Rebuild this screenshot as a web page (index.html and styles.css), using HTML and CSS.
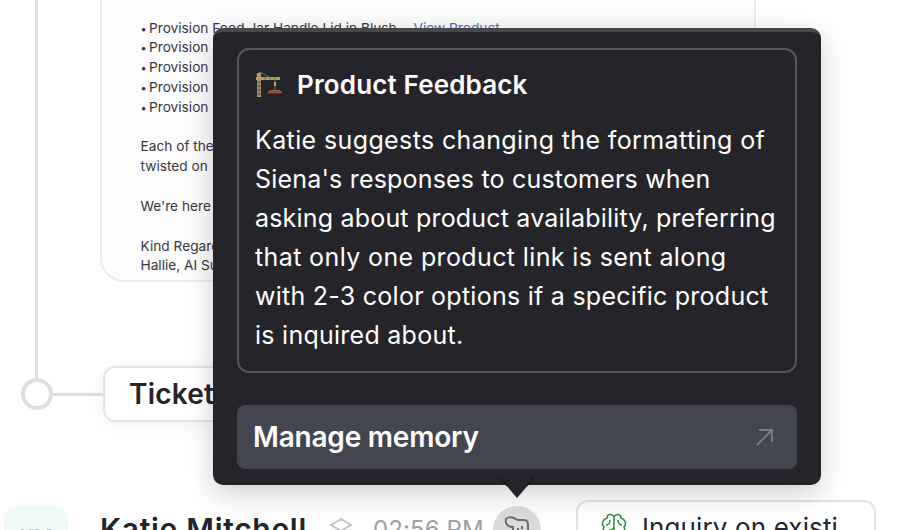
FILE: index.html
```html
<!DOCTYPE html>
<html lang="en">
<head>
<meta charset="utf-8">
<title>Conversation</title>
<link rel="stylesheet" href="styles.css">
</head>
<body>
<main class="page">
  <section class="timeline">
    <div class="rail">
      <div class="rail-line"></div>
      <div class="rail-node"><span class="ring"></span><span class="connector"></span></div>
    </div>
    <div class="events">
      <article class="email">
        <ul class="products">
          <li><span class="bullet">•</span>Provision Food Jar Handle Lid in Blush <span class="dash">-</span><a class="link">View Product</a></li>
          <li><span class="bullet">•</span>Provision</li>
          <li><span class="bullet">•</span>Provision</li>
          <li><span class="bullet">•</span>Provision</li>
          <li><span class="bullet">•</span>Provision</li>
        </ul>
        <p>Each of these<br>twisted on</p>
        <p>We're here</p>
        <p>Kind Regards,<br>Hallie, AI Support</p>
      </article>
      <div class="ticket">Ticket</div>
    </div>
  </section>
  <section class="message">
    <div class="avatar">KM</div>
    <div class="name">Katie Mitchell</div>
    <svg class="layers" width="24" height="24" viewBox="0 0 24 24"><path d="M2 7 12 1l10 6-10 6zM2 12l10 6 10-6"/></svg>
    <div class="time">02:56 PM</div>
    <div class="memory"><svg width="28" height="28" viewBox="0 0 28 28"><path d="M9 15v-3C3 12 1 8 2 4c1-2 5-2 8-1 2 1 2 2 4 2h6c3 0 4 2 4 5v6c0 5-4 7-8 7-4 0-7-4-7-8M14 13v2M18 11v3"/></svg></div>
    <div class="tag">
      <svg width="28" height="28" viewBox="0 0 28 28"><path d="M14 4v21M14 5C12 1 7 2 7 6 3 7 1 12 4 15c-2 4 1 8 5 8 1 3 5 3 5 0M14 5c2-4 7-3 7 1 4 1 6 6 3 9 2 4-1 8-5 8-1 3-5 3-5 0M10 8c0 3-2 5-4 5M18 8c0 3 2 5 4 5M9 18c3 0 5-2 5-4"/></svg>
      <span>Inquiry on existi</span>
    </div>
  </section>
</main>
<aside class="tooltip">
  <div class="memo">
    <h2 class="memo-title">
      <svg width="28" height="28" viewBox="0 0 28 28"><path class="cable" d="M1 4 5 1l9 5M20 9v10"/><path class="mast" d="M2 2h4v24H2zM1 6h24v3H1z"/><path class="lattice" d="M2 11h4M2 15h4M2 19h4M2 23h4M9 7.5h2M14 7.5h2M19 7.5h2M4 10v15"/><path class="hook" d="M20 11v4"/><path class="cable" d="M15 19.5h10"/><path class="load" d="M13 20h14v2.4H13z"/></svg>
      <span>Product Feedback</span>
    </h2>
    <p class="memo-text"><span class="wide">Katie suggests changing the formatting of</span><br><span class="snug">Siena's responses to customers when</span><br><span class="snug">asking about product availability, preferring</span><br><span class="wide">that only one product link is sent along</span><br>with 2-3 color options if a specific product<br>is inquired about.</p>
  </div>
  <div class="manage">
    <span>Manage memory</span>
    <svg width="18" height="18" viewBox="0 0 18 18"><path d="M1 17 16 2M3 2h13v12"/></svg>
  </div>
  <svg class="arrow" width="36" height="21" viewBox="0 0 36 21"><path d="M0 0h36L18 21z"/><path class="arrow-edge" d="M1 0l7 9M35 0l-7 9"/></svg>
</aside>
</body>
</html>
```
FILE: styles.css
```css
* { box-sizing: border-box; }
body { margin: 0; background: #fff; color: #25242a; font-family: Inter, "Liberation Sans", sans-serif; overflow: hidden; }
svg { display: block; flex: none; fill: none; }
.page { height: 530px; overflow: hidden; }
.timeline { display: grid; grid-template-columns: 100px 656px; height: 422px; }
.rail-line { width: 3px; height: 378px; margin-left: 35px; background: #dcdfe2; }
.rail-node { display: flex; align-items: center; width: 103px; padding-left: 21px; }
.ring { width: 32px; height: 32px; border: 4px solid #dcdfe2; border-radius: 50%; }
.connector { flex: 1; height: 3px; background: #dcdfe2; }
.email { height: 282px; padding: 18.5px 38.5px 0; border: 2px solid #ececec; border-top: 0; border-radius: 0 0 24px 24px; background: #fcfcfc; font-size: 13.7px; line-height: 19.75px; white-space: nowrap; color: #38383e; }
.products { list-style: none; margin: 0; padding: 0; }
.products li { height: 19.75px; }
.bullet { display: inline-block; width: 8.5px; font-size: 11px; line-height: 1; }
.dash { display: inline-block; width: 13px; }
.email p { margin: 20px 0 0; }
.link { color: #4470c4; }
.ticket { width: 230px; height: 56px; margin: 84px 0 0 3px; padding-left: 24px; border: 2px solid #e4e4e5; border-radius: 12px; background: #fff; box-shadow: 0 4px 20px rgba(0,0,0,.05); font-size: 28px; letter-spacing: .2px; font-weight: 600; line-height: 53px; }
.message { display: flex; align-items: flex-start; height: 108px; padding: 78px 0 0 4px; }
.avatar { width: 64px; height: 64px; margin-top: 6px; border-radius: 12px; background: #f0fbf9; color: #b4c4c0; font-size: 20px; font-weight: 600; line-height: 62px; text-align: center; flex: none; }
.name { width: 206px; margin: 12px 0 0 32px; font-size: 30px; letter-spacing: .7px; line-height: 35px; font-weight: 600; white-space: nowrap; flex: none; }
.layers { margin: 18px 0 0 23px; stroke: #c3c6cb; stroke-width: 2; }
.time { width: 112px; margin: 15px 0 0 20px; color: #9b9fa8; font-size: 24px; line-height: 29px; letter-spacing: .1px; white-space: nowrap; flex: none; }
.memory { display: flex; width: 48px; height: 48px; margin: 6px 0 0 8px; padding: 9px 0 0 11px; border-radius: 50%; background: #dadada; flex: none; }
.memory svg { stroke: #6b6b6e; stroke-width: 2; }
.tag { display: flex; width: 300px; height: 64px; margin-left: 35px; padding: 10px 0 0 22px; border: 2px solid #e2e2e3; border-radius: 12px; background: #fff; font-size: 26px; line-height: 31px; letter-spacing: .12px; white-space: nowrap; flex: none; }
.tag svg { stroke: #3c8b43; stroke-width: 1.6; }
.tag span { margin-left: 14px; }
.tooltip { position: absolute; left: 213px; top: 28px; width: 608px; height: 457px; padding: 16px 24px; border-top: 4px solid #48484b; border-radius: 10px; background: #25242a; color: #fff; box-shadow: 0 8px 28px rgba(0,0,0,.2); }
.memo { height: 325px; padding: 20px 16px; border: 2px solid #58575c; border-radius: 12px; }
.memo-title { display: flex; align-items: center; gap: 14px; height: 30px; margin: 0; font-size: 26px; font-weight: 600; line-height: 30px; letter-spacing: .15px; white-space: nowrap; }
.memo-text { margin: 21px 0 0; font-size: 25px; line-height: 39px; letter-spacing: .26px; white-space: nowrap; }
.wide { letter-spacing: .38px; }
.snug { letter-spacing: .19px; }
.cable { stroke: #6e6c69; }
.mast { fill: #b79b5d; }
.lattice { stroke: #716a5c; stroke-width: 1.3; }
.hook { stroke: #c9a645; stroke-width: 2; }
.load { fill: #c43d2d; }
.manage { display: flex; align-items: center; justify-content: space-between; height: 64px; margin-top: 32px; padding: 0 23px 0 16px; border-radius: 8px; background: #434650; font-size: 28px; font-weight: 600; letter-spacing: -.2px; }
.manage svg { stroke: #7c7e82; stroke-width: 1.8; }
.arrow { position: absolute; left: 286px; top: 445px; fill: #25242a; }
.arrow-edge { stroke: #17171a; stroke-width: 1.2; }
```
